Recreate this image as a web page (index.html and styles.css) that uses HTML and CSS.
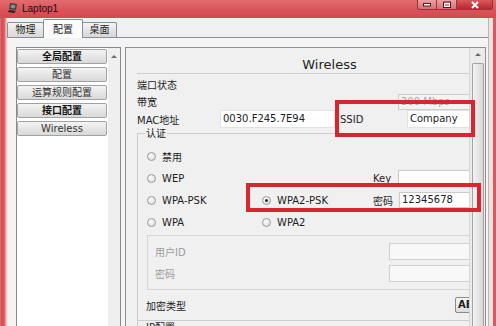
FILE: index.html
```html
<!DOCTYPE html>
<html lang="zh-CN">
<head>
    <meta charset="UTF-8">
    <title>Laptop1</title>
    <link rel="stylesheet" href="styles.css">
</head>
<body>
    <div class="window">
        <div class="titlebar">
            <svg class="app-icon" width="11" height="12" viewBox="0 0 11 12">
                <path d="M2 1 L9 2 L8 8 L1 7 Z" fill="#3a3a3a"/>
                <path d="M3 2.5 L7.5 3.2 L7 6.6 L2.5 6 Z" fill="#8c8c8c"/>
                <path d="M1 8 L8 9 L6 11 L0 10 Z" fill="#222"/>
            </svg>
            <span class="title">Laptop1</span>
            <div class="caption">
                <div class="cap-btn">
                    <svg width="10" height="5" viewBox="0 0 10 5"><rect x="1.5" y="1.5" width="7" height="2.5" fill="#fff" stroke="#4a2020"/></svg>
                </div>
                <div class="cap-btn">
                    <svg width="10" height="8" viewBox="0 0 10 8"><rect x="1.5" y="1" width="7" height="5.5" fill="none" stroke="#4a2020"/><rect x="2.5" y="2.5" width="5" height="3" fill="none" stroke="#fff"/></svg>
                </div>
                <div class="cap-btn close">
                    <svg width="10" height="8" viewBox="0 0 10 8"><path d="M2 1 L8 7 M8 1 L2 7" stroke="#fff" stroke-width="2"/></svg>
                </div>
            </div>
        </div>

        <div class="client">
            <div class="tabs">
                <div class="tab tab-phys">物理</div>
                <div class="tab tab-conf active">配置</div>
                <div class="tab tab-desk">桌面</div>
            </div>

            <div class="tab-panel">
                <div class="side-list">
                    <div class="side-items">
                        <div class="side-btn head">全局配置</div>
                        <div class="side-btn">配置</div>
                        <div class="side-btn">运算规则配置</div>
                        <div class="side-btn head">接口配置</div>
                        <div class="side-btn">Wireless</div>
                    </div>
                    <div class="side-scroll"><span class="arrow-up"></span></div>
                </div>

                <div class="config">
                    <div class="config-view">
                        <div class="config-body">
                            <div class="form-title">Wireless</div>

                            <div class="info-rows">
                                <div class="info-row">
                                    <span>端口状态</span>
                                </div>
                                <div class="info-row">
                                    <span>带宽</span>
                                    <div class="bw-select">300 Mbps</div>
                                </div>
                                <div class="info-row">
                                    <span>MAC地址</span>
                                    <div class="field tall">0030.F245.7E94</div>
                                    <span class="ssid-label">SSID</span>
                                    <div class="field tall">Company</div>
                                </div>
                            </div>

                            <fieldset class="auth">
                                <legend>认证</legend>
                                <div class="auth-grid">
                                    <label class="opt"><span class="radio"></span>禁用</label>
                                    <span></span><span></span><span></span>

                                    <label class="opt"><span class="radio"></span>WEP</label>
                                    <span></span>
                                    <span>Key</span>
                                    <div class="field"></div>

                                    <label class="opt"><span class="radio"></span>WPA-PSK</label>
                                    <label class="opt"><span class="radio checked"></span>WPA2-PSK</label>
                                    <span>密码</span>
                                    <div class="field pass">12345678</div>

                                    <label class="opt"><span class="radio"></span>WPA</label>
                                    <label class="opt"><span class="radio"></span>WPA2</label>
                                </div>

                                <div class="cred">
                                    <span>用户ID</span>
                                    <div class="field off"></div>
                                    <span>密码</span>
                                    <div class="field off"></div>
                                </div>

                                <div class="enc">
                                    <span>加密类型</span>
                                    <div class="enc-btn">AES</div>
                                </div>
                            </fieldset>

                            <div class="ip-section">IP配置</div>
                        </div>
                    </div>
                    <div class="vscroll">
                        <span class="arrow-up"></span>
                        <div class="thumb"></div>
                    </div>
                </div>
            </div>
        </div>

        <!-- annotation boxes drawn over the screenshot -->
        <div class="mark mark-ssid"></div>
        <div class="mark mark-psk"></div>
    </div>
</body>
</html>
```

FILE: styles.css
```css
* {
    box-sizing: border-box;
}

body {
    margin: 0;
    font-family: "DejaVu Sans", "Noto Sans CJK SC", sans-serif;
    font-size: 10px;
    color: #1d1d1d;
    background: #d9575b;
}

.window {
    position: relative;
    width: 496px;
    height: 326px;
    overflow: hidden;
    display: flex;
    flex-direction: column;
    padding: 0 7px;
    background: linear-gradient(90deg, #e57376 0, #cf4b50 2px, #e26a6d 5px, #f2c4c4 6px, #f2c4c4 calc(100% - 7px), #f7dede calc(100% - 7px), #f7dede calc(100% - 3px), #d85a5e calc(100% - 3px));
}

/* title bar */
.titlebar {
    margin: 0 -7px;
    height: 18px;
    flex-shrink: 0;
    display: flex;
    align-items: flex-start;
    padding: 0 3px 0 8px;
    background: linear-gradient(180deg, #e26c70 0%, #d9545a 55%, #d24a50 100%);
}

.app-icon {
    margin-top: 2px;
}

.title {
    margin-left: 3px;
    font-family: "Liberation Sans", Arial, sans-serif;
    font-size: 10px;
    line-height: 17px;
    color: #111;
}

.caption {
    margin-left: auto;
    display: flex;
}

.cap-btn {
    width: 20px;
    height: 10px;
    display: flex;
    align-items: center;
    justify-content: center;
    border: 1px solid #8a3b3e;
    border-top: none;
    background: linear-gradient(180deg, rgba(255,255,255,0.35), rgba(255,255,255,0.12));
}

.cap-btn + .cap-btn {
    border-left: none;
}

.cap-btn:first-child {
    border-bottom-left-radius: 3px;
}

.cap-btn.close {
    width: 36px;
    background: linear-gradient(180deg, #d8585b, #b8292d);
    border-bottom-right-radius: 3px;
}

/* client area */
.client {
    flex: 1;
    min-height: 0;
    display: flex;
    flex-direction: column;
    background: #f0f0f0;
    border-right: 1px solid #b8b8b8;
}

.tabs {
    height: 19px;
    flex-shrink: 0;
    display: flex;
    align-items: flex-end;
}

.tab {
    height: 15px;
    border: 1px solid #8b8e96;
    border-bottom: none;
    border-radius: 2px 2px 0 0;
    background: linear-gradient(180deg, #f4f4f4, #e4e4e4 50%, #d8d8d8);
    text-align: center;
    line-height: 14px;
}

.tab + .tab {
    margin-left: -1px;
}

.tab-phys { width: 37px; }
.tab-conf { width: 40px; }
.tab-desk { width: 35px; }

.tab.active {
    position: relative;
    z-index: 1;
    height: 19px;
    margin-bottom: -1px;
    line-height: 20px;
    background: #fbfbfb;
}

.tab-panel {
    flex: 1;
    min-height: 0;
    display: flex;
    gap: 4px;
    padding: 9px 2px 0 9px;
    border-top: 1px solid #8b8e96;
    background: #f4f4f4;
}

/* left list */
.side-list {
    width: 105px;
    display: flex;
    justify-content: space-between;
    padding-top: 1px;
    border: 1px solid #868a92;
    border-bottom: none;
    background: #fff;
}

.side-items {
    width: 90px;
    display: flex;
    flex-direction: column;
    gap: 3px;
}

.side-btn {
    height: 15px;
    border: 1px solid #a2a2a2;
    border-radius: 2px;
    background: linear-gradient(180deg, #f4f4f4, #e6e6e6 50%, #d9d9d9);
    text-align: center;
    line-height: 13px;
    color: #333;
}

.side-btn.head {
    font-weight: bold;
    color: #111;
}

.side-scroll {
    width: 12px;
    margin-top: -1px;
    padding-top: 7px;
    display: flex;
    justify-content: center;
    background: #efefef;
}

.arrow-up {
    width: 0;
    height: 0;
    border-left: 3px solid transparent;
    border-right: 3px solid transparent;
    border-bottom: 3px solid #6a6a6a;
}

/* right config panel */
.config {
    flex: 1;
    min-width: 0;
    display: flex;
    border: 1px solid #8e8f91;
    border-bottom: none;
    background: #f0f0f0;
}

.config-view {
    flex: 1;
    min-width: 0;
    overflow: hidden;
}

.config-body {
    width: 396px;
    padding: 9px 0 0 11px;
}

.form-title {
    font-size: 13px;
    line-height: 16px;
    text-align: center;
    color: #222;
    border-bottom: 1px solid #cfcfcf;
}

.info-rows {
    margin-top: 2px;
}

.info-row {
    height: 17px;
    display: grid;
    grid-template-columns: 83px 115px 72px 1fr;
    align-items: center;
}

.ssid-label {
    padding-left: 5px;
}

.bw-select {
    grid-column: 3 / 5;
    margin-left: 63px;
    height: 16px;
    padding-left: 2px;
    border: 1px solid #cdcdcd;
    background: #f3f3f3;
    color: #a8a8a8;
    line-height: 14px;
}

.field {
    height: 16px;
    padding: 0 2px;
    border: 1px solid #cacaca;
    background: #fff;
    line-height: 14px;
    white-space: nowrap;
    overflow: hidden;
}

.field.tall {
    height: 18px;
    line-height: 16px;
    border-color: #e2e2e2;
}

.field.pass {
    margin-left: 1px;
}

.field.off {
    height: 17px;
    border-color: #d0d0d0;
    background: #f8f8f8;
}

/* authentication group */
.auth {
    margin: 0;
    padding: 0 0 6px 0;
    min-width: 0;
    border: 1px solid #cdcdcd;
}

.auth legend {
    margin-left: 7px;
    padding: 0 1px;
    line-height: 13px;
}

.auth-grid {
    display: grid;
    grid-template-columns: 115px 111px 25px 1fr;
    grid-auto-rows: 22px;
    align-items: center;
    padding: 5px 0 0 9px;
}

.opt {
    display: flex;
    align-items: center;
    gap: 6px;
}

.radio {
    width: 9px;
    height: 9px;
    border-radius: 50%;
    border: 1px solid #9a9a9a;
    background: radial-gradient(circle at 40% 35%, #fdfdfd, #d6d6d6);
    display: flex;
    align-items: center;
    justify-content: center;
}

.radio.checked::after {
    content: "";
    width: 3px;
    height: 3px;
    border-radius: 50%;
    background: #2b2b2b;
}

.cred {
    margin: 2px 10px 0 9px;
    padding: 7px 0 7px 7px;
    display: grid;
    grid-template-columns: 234px 1fr;
    grid-auto-rows: 17px;
    row-gap: 5px;
    align-items: center;
    border: 1px solid #d6d6d6;
    color: #9c9c9c;
}

.enc {
    height: 18px;
    margin-top: 6px;
    padding-left: 8px;
    display: grid;
    grid-template-columns: 309px auto;
    align-items: center;
}

.enc-btn {
    width: 40px;
    height: 16px;
    padding-left: 2px;
    border: 1px solid #8a8a8a;
    border-radius: 2px;
    background: linear-gradient(180deg, #f4f4f4, #dcdcdc);
    font-weight: bold;
    line-height: 14px;
}

.ip-section {
    padding: 1px 0 0 8px;
    line-height: 12px;
    border-left: 1px solid #cdcdcd;
}

.vscroll {
    width: 16px;
    display: flex;
    flex-direction: column;
    align-items: center;
    padding-top: 5px;
    background: #ebebeb;
    border-left: 1px solid #d6d6d6;
}

.vscroll .arrow-up {
    margin-bottom: 7px;
}

.thumb {
    flex: 1;
    width: 12px;
    border: 1px solid #a3a3a3;
    border-bottom: none;
    border-radius: 2px 2px 0 0;
    background: linear-gradient(90deg, #f2f2f2, #d9d9d9);
}

/* red annotation boxes */
.mark {
    position: absolute;
    border: 4px solid #d7262e;
    z-index: 5;
}

.mark-ssid {
    left: 335px;
    top: 100px;
    width: 140px;
    height: 37px;
}

.mark-psk {
    left: 246px;
    top: 183px;
    width: 235px;
    height: 29px;
}
```
